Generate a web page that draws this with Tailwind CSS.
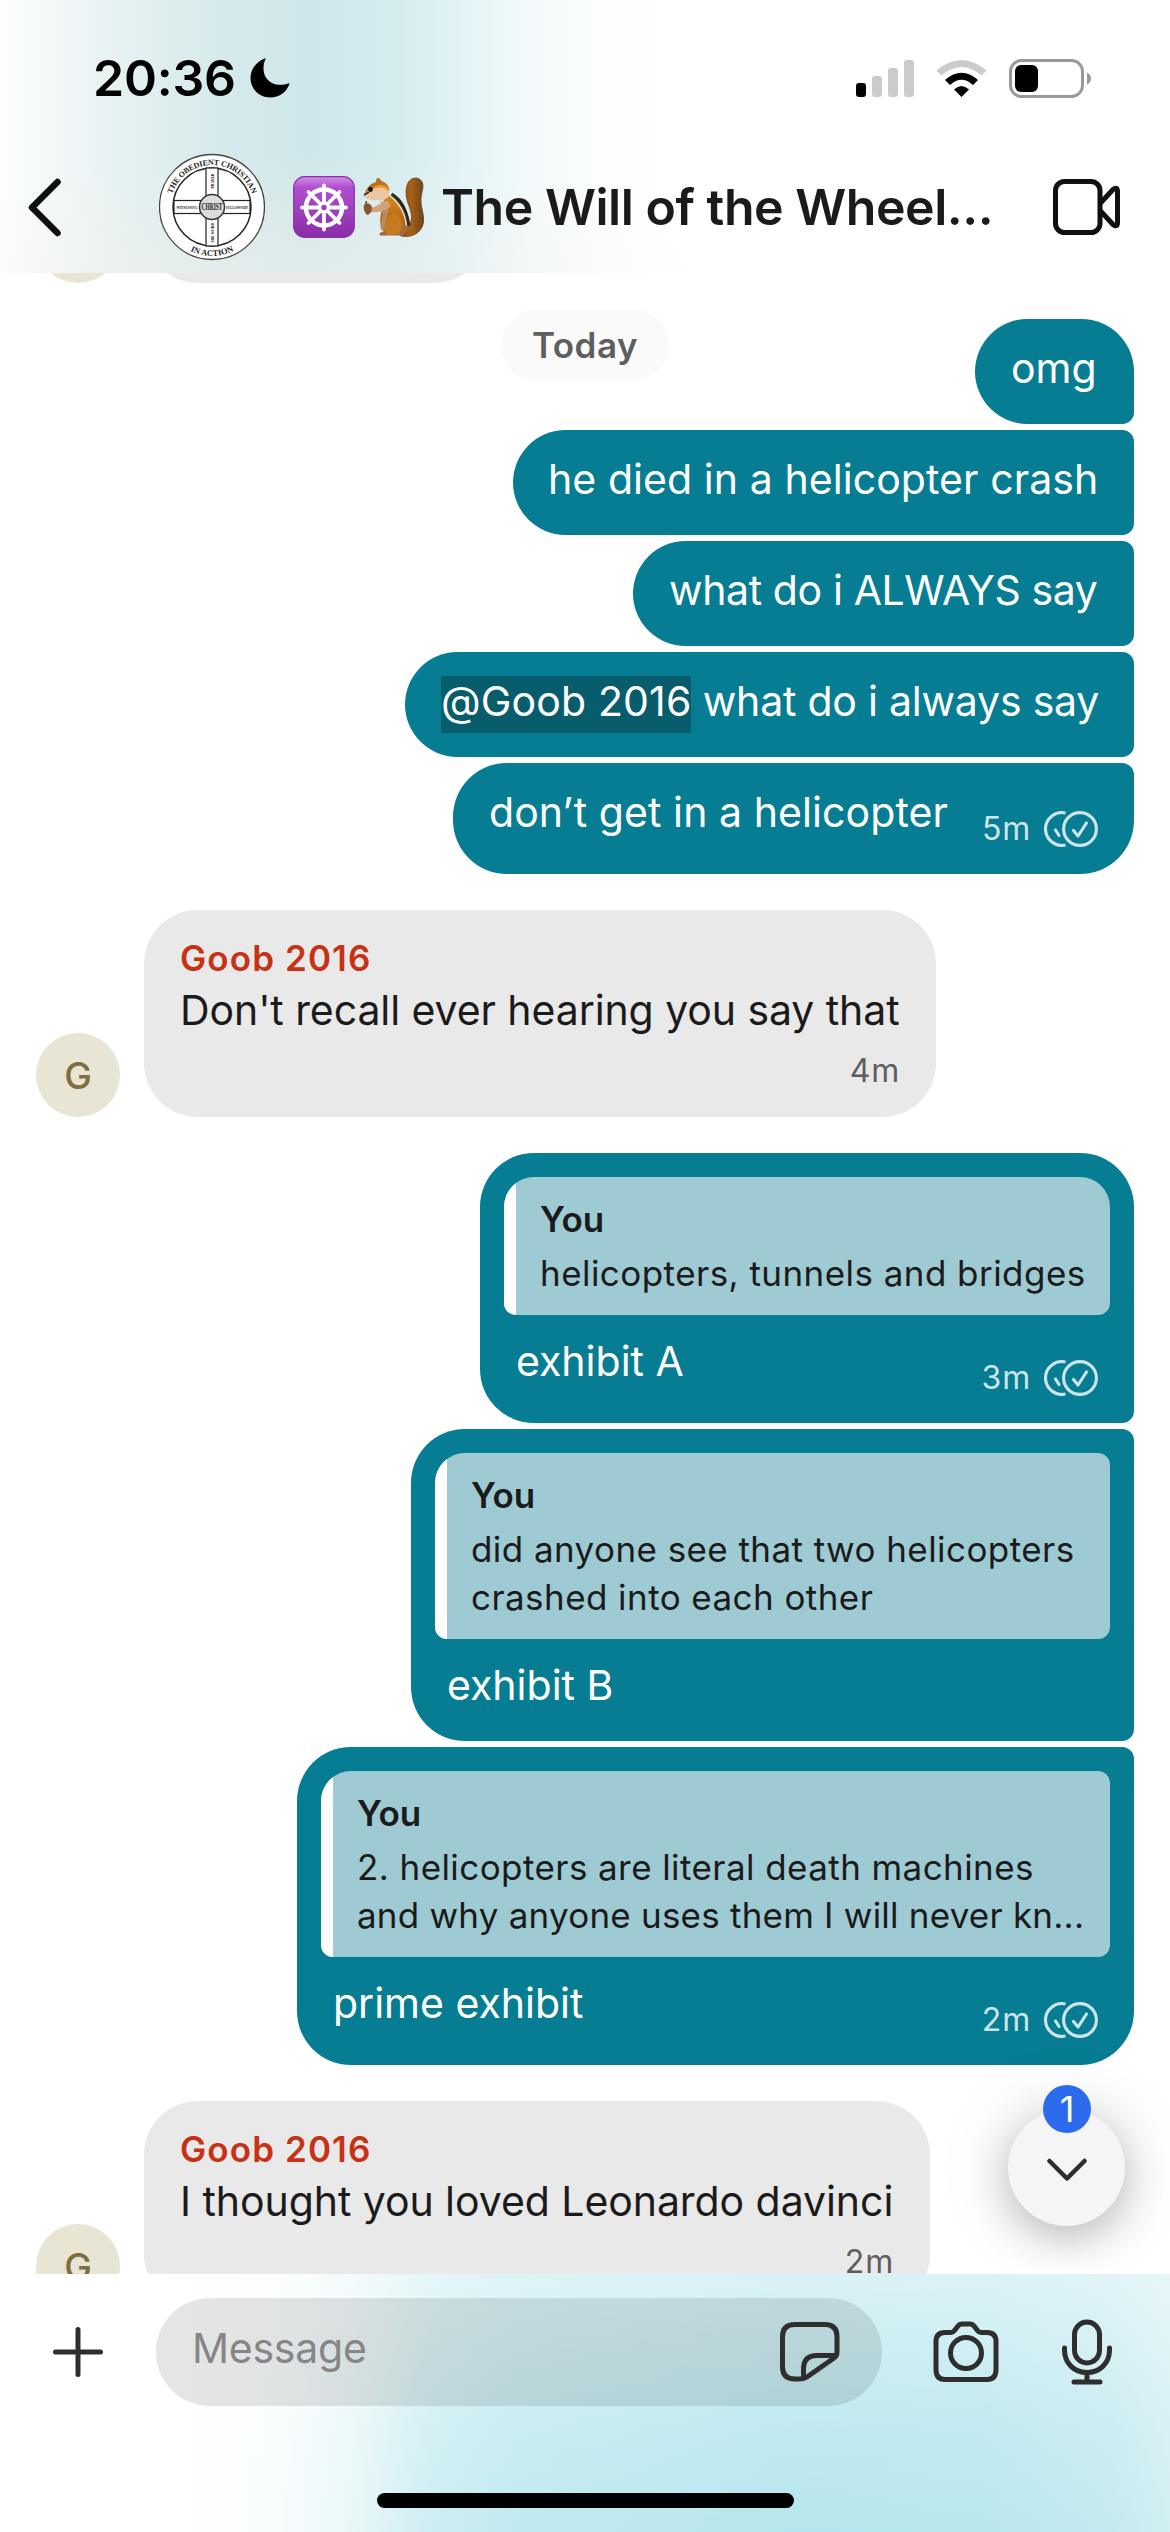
<!DOCTYPE html>
<html lang="en">
<head>
<meta charset="utf-8">
<title>Group chat</title>
<script src="https://cdn.jsdelivr.net/npm/@tailwindcss/browser@4"></script>
</head>
<body class="bg-white">
<svg class="hidden">
  <symbol id="read" viewBox="0 0 54 36" fill="none" stroke="currentColor" stroke-width="3.1" stroke-linecap="round" stroke-linejoin="round">
    <circle cx="36" cy="18" r="16.4"/>
    <path d="M21.5 2A16.4 16.4 0 1 0 21.5 34" stroke-linecap="butt"/>
    <path d="M29.5 19.5L34 25L42.5 12"/>
    <path d="M11.5 19L15 24.5"/>
  </symbol>
</svg>
<div class="relative flex h-[2532px] w-[1170px] flex-col overflow-hidden bg-white font-['Inter',sans-serif] text-[#1b1b1b]">

  <header class="flex h-[273px] shrink-0 flex-col bg-[radial-gradient(420px_150px_at_300px_300px,rgba(247,240,236,0.55),rgba(247,240,236,0)),linear-gradient(to_right,#fcfefe_0px,#f0f6f7_70px,#e4f0f1_130px,#d6eaec_220px,#cfe7ea_310px,#d6edf0_400px,#e2f3f6_460px,#f3fafb_530px,#fbfdfe_600px,#ffffff_680px)]">
    <div class="flex h-[156px] items-center pr-[78px] pl-[93px]">
      <span class="text-[50px] leading-[60px] font-semibold tracking-[-0.2px] text-black">20:36</span>
      <svg class="ml-[14px] h-10 w-10" viewBox="0 0 40 40"><path d="M15.5 1C16 .3 15.6 0 14.7.4C6 4 .5 11 .5 20C.5 31 9 39.5 20.5 39.5C29 39.5 36 34.500 39.300 26.500C39.700 25.500 39.300 25 38.300 25.400C35.500 26.500 32.500 27 29.500 26.800C20 26.500 13.500 20 13.500 10.500C13.500 7 14.200 3.800 15.500 1Z"/></svg>
      <svg class="ml-auto h-[37px] w-[58px]" viewBox="0 0 58 37"><rect y="23" width="10" height="14" rx="3"/><g fill="#cbcbcb"><rect x="16" y="16" width="10" height="21" rx="3"/><rect x="32" y="8" width="10" height="29" rx="3"/><rect x="48" width="10" height="37" rx="3"/></g></svg>
      <svg class="ml-[22px] h-[37px] w-[51px]" viewBox="0 0 51 37"><path d="M0.500 10.500Q25.500 -10.500 50.500 10.500L45.500 15.500Q25.500 -1.500 5.500 15.500Z" fill="#cbcbcb"/><path d="M9 20Q25.500 5.500 42 20L37 25Q25.500 14.500 14 25Z"/><path d="M18 29.500Q25.500 22.500 33 29.500L25.500 37Z"/></svg>
      <svg class="ml-[22px] h-[39px] w-[83px]" viewBox="0 0 83 39"><rect x="1.500" y="1.500" width="72" height="36" rx="11" fill="none" stroke="#999" stroke-width="3"/><rect x="6" y="6" width="23" height="27" rx="6"/><path d="M78 13.500Q82 15.500 82 19.500T78 25.500Z" fill="#999"/></svg>
    </div>
    <div class="flex h-[102px] items-center pr-[49px] pl-[28px]">
      <svg class="h-[66px] w-[34px]" viewBox="0 0 34 66" fill="none" stroke="#101010" stroke-width="6.500" stroke-linecap="round" stroke-linejoin="round"><path d="M29.500 8L4 33.500L29.500 59"/></svg>
      <svg class="ml-[97px] h-[108px] w-[106px]" viewBox="-53 -54 106 108" font-family="Liberation Serif" font-weight="bold" fill="#222">
        <circle r="52.500" fill="#fff" stroke="#444" stroke-width="1.300"/>
        <circle r="39" fill="#fff" stroke="#222" stroke-width="1.500"/>
        <rect x="-38" y="-6.500" width="76" height="13" fill="#fff" stroke="#222" stroke-width="1.200"/>
        <rect x="-6" y="-39" width="12" height="78" fill="#fff" stroke="#222" stroke-width="1.200"/>
        <path d="M-5.300 0H5.300M0 -5.800V5.800" stroke="#fff" stroke-width="11"/>
        <circle r="12.500" fill="#dcdcdc" stroke="#333" stroke-width="1.500"/>
        <text y="3.200" font-size="9.500" text-anchor="middle" textLength="21" lengthAdjust="spacingAndGlyphs">CHRIST</text>
        <g font-size="4.200" text-anchor="middle"><text x="-25" y="1.500" textLength="21" lengthAdjust="spacingAndGlyphs">WITNESSING</text><text x="25" y="1.500" textLength="22" lengthAdjust="spacingAndGlyphs">FELLOWSHIP</text><text transform="translate(1.500 -26) rotate(-90)" textLength="15" lengthAdjust="spacingAndGlyphs">PRAYER</text><text transform="translate(1.500 26) rotate(-90)" textLength="20" lengthAdjust="spacingAndGlyphs">THE WORD</text></g>
        <path id="arcTop" d="M-42 0A42 42 0 0 1 42 0" fill="none"/>
        <path id="arcBottom" d="M-49 0A49 49 0 0 0 49 0" fill="none"/>
        <text font-size="8" letter-spacing="-0.15" text-anchor="middle"><textPath href="#arcTop" startOffset="50%">THE OBEDIENT CHRISTIAN</textPath></text>
        <text font-size="8.500" text-anchor="middle"><textPath href="#arcBottom" startOffset="50%">IN ACTION</textPath></text>
      </svg>
      <svg class="ml-[28px] h-[62px] w-[62px]" viewBox="0 0 62 62">
        <defs><linearGradient id="violet" x2="0" y2="1"><stop stop-color="#cf8be6"/><stop offset=".18" stop-color="#b04fd0"/><stop offset="1" stop-color="#8a2da8"/></linearGradient></defs>
        <rect x=".7" y=".7" width="60.600" height="60.600" rx="11" fill="url(#violet)" stroke="#8931a5" stroke-width="1.200"/>
        <g transform="translate(31 31.500)" stroke="#fff" fill="none" stroke-linecap="round"><circle r="18" stroke-width="4.500"/><circle r="4.500" stroke-width="3.500"/><path stroke-width="3.800" d="M0 -6V-22M0 6V22M-6 0H-22M6 0H22M4.500 4.500L15.500 15.500M-4.500 4.500L-15.500 15.500M4.500 -4.500L15.500 -15.500M-4.500 -4.500L-15.500 -15.500"/></g>
      </svg>
      <svg class="ml-[7px] h-[62px] w-[64px]" viewBox="0 0 64 62">
        <defs><linearGradient id="fur" x2="0" y2="1"><stop stop-color="#d9881c"/><stop offset=".55" stop-color="#bd6b10"/><stop offset="1" stop-color="#9b6a42"/></linearGradient><linearGradient id="tail" x2="1"><stop stop-color="#8a4a10"/><stop offset=".5" stop-color="#a86117"/><stop offset="1" stop-color="#6b4420"/></linearGradient></defs>
        <path d="M39 60C48 62 60 58 61.500 46C62.500 38 58 30 59 22C60 14 62.500 10 59.500 5C56 0 48 1.500 45.500 8C43 15 44 22 47 30C50 38 51 46 46 50C43 53 39 53 36 55Z" fill="url(#tail)" stroke="#70400f" stroke-width=".8"/>
        <path d="M22 22C30 16 40 24 44 34C49 46 47 55 41 59.500H18C16.500 57.500 18.500 56 22 56C17 50 17.500 40 20 34Z" fill="url(#fur)"/>
        <path d="M25 59C21 52 23 41 31 37C39 38 42 50 37 58Z" fill="#c77b20"/>
        <path d="M29 19C38 24 44 36 46 50" fill="none" stroke="#33281e" stroke-width="5"/>
        <path d="M28 20C38 27 43 38 44.500 50" fill="none" stroke="#efe0c8" stroke-width="1.600"/>
        <path d="M18.500 24C20 33 22 37 20 44C17.500 51 18 53 22 56C24 48 24 40 27 35Z" fill="#b98a62"/>
        <path d="M14 5C14 1 17 .5 19.500 5C25 7 28 12 27.500 18C27 22 23 24 18 24C10 25 4 23 2 20C3 13 7 8 14 6Z" fill="#e9c7a0"/>
        <path d="M14 6C14 1 17 .5 19.500 5C24 6.500 27 10 27.500 14C22 9 11 10 3 17C5 11 9 7.500 14 6Z" fill="#b3702c"/>
        <path d="M12 12C17 9 22 9 27 14" fill="none" stroke="#ef941d" stroke-width="2.500"/>
        <circle cx="8.500" cy="13.500" r="2.400" fill="#17110c"/><path d="M2 19L7 16" stroke="#3b291b" stroke-width="1.500"/>
        <path d="M26 25C22 24 17 30 8 32C6 34 8 37 12 36C19 36 26 34 29 30Z" fill="#d3a27a"/>
        <path d="M2 29C5 26 10 28 10 32C10 36 7 39 5 39C3 37 1 33 2 29Z" fill="#88552d"/><path d="M4 28L4.500 25" stroke="#674018" stroke-width="1.500"/>
      </svg>
      <h1 class="ml-[15px] w-[560px] text-[50px] leading-[60px] font-[560] tracking-[-0.46px] whitespace-nowrap">The Will of the Wheel...</h1>
      <svg class="ml-auto h-[58px] w-[68px]" viewBox="0 0 68 58" fill="none" stroke="#101010" stroke-width="5" stroke-linejoin="round"><rect x="2.500" y="3.500" width="44.500" height="51" rx="9"/><path d="M47.500 25L60 11.500Q64.500 8 64.500 13.500V44.500Q64.500 50 60 46.500L47.500 33"/></svg>
    </div>
  </header>

  <main class="relative min-h-0 flex-1 overflow-hidden px-[36px] text-[41px] leading-[57px]">
    <div class="absolute top-[36px] left-[501px] flex h-[72px] w-[168px] items-center justify-center rounded-full bg-[#fafafa] text-[35px] font-[560] tracking-[0.5px] text-[#5e5e5e]">Today</div>

    <div class="-mt-[98px] flex h-[108px] gap-6"><div class="mt-auto h-[84px] w-[84px] rounded-full bg-[#e9e5d4]"></div><div class="w-[344px] rounded-[54px] bg-[#e9e9e9]"></div></div>

    <section class="mt-[36px] flex flex-col items-end gap-[6px] text-white">
      <p class="h-[105px] w-[159px] rounded-[54px] rounded-br-[12px] bg-[#067d92] px-[36px] pt-[21px]">omg</p>
      <p class="h-[105px] w-[621px] rounded-l-[54px] rounded-r-[12px] bg-[#067d92] pt-[21px] pl-[35px] tracking-[0.07px] whitespace-nowrap">he died in a helicopter crash</p>
      <p class="h-[105px] w-[501px] rounded-l-[54px] rounded-r-[12px] bg-[#067d92] px-[36px] pt-[21px] tracking-[-0.38px] whitespace-nowrap">what do i ALWAYS say</p>
      <p class="h-[105px] w-[729px] rounded-l-[54px] rounded-r-[12px] bg-[#067d92] pt-[21px] pl-[36px] tracking-[-0.22px] whitespace-nowrap"><span class="bg-[#085d6d] pb-[7px] tracking-[0.15px]">@Goob 2016</span> what do i always say</p>
      <div class="flex h-[111px] w-[681px] justify-between rounded-l-[54px] rounded-tr-[12px] rounded-br-[54px] bg-[#067d92] pt-[21px] pr-[36px] pb-[27px] pl-[36px]">
        <p class="tracking-[0.08px] whitespace-nowrap">don’t get in a helicopter</p>
        <div class="flex gap-[13px] self-end text-[32px] leading-[36px] tracking-[0.8px] text-[#cde5e9]"><span>5m</span><svg class="h-[36px] w-[54px]"><use href="#read"/></svg></div>
      </div>
    </section>

    <section class="mt-[36px] flex items-end gap-6">
      <div class="flex h-[84px] w-[84px] items-center justify-center rounded-full bg-[#e9e5d4] text-[37px] font-medium text-[#7d6f40]">G</div>
      <div class="flex h-[207px] w-[792px] flex-col rounded-[54px] bg-[#e9e9e9] px-[36px] pt-[24px]">
        <span class="text-[35px] leading-[48px] font-[560] tracking-[1.1px] text-[#c73214]">Goob 2016</span>
        <p class="tracking-[-0.08px] whitespace-nowrap">Don't recall ever hearing you say that</p>
        <span class="mt-[14px] self-end text-[32px] leading-[36px] tracking-[0.8px] text-[#5e5e5e]">4m</span>
      </div>
    </section>

    <section class="mt-[36px] flex flex-col items-end gap-[6px]">
      <div class="h-[270px] w-[654px] rounded-[54px] rounded-br-[12px] bg-[#067d92] px-[24px] pt-[24px]">
        <div class="flex h-[138px] overflow-hidden rounded-t-[30px] rounded-b-[12px] bg-[#9dcad3]">
          <div class="w-[12px] shrink-0 bg-white"></div>
          <div class="pt-[18px] pl-[24px] text-[35px] leading-[48px] whitespace-nowrap"><p class="font-semibold">You</p><p class="mt-[6px] tracking-[0.45px]">helicopters, tunnels and bridges</p></div>
        </div>
        <div class="mt-[18px] flex h-[63px] justify-between px-[12px] text-white"><p>exhibit A</p><div class="flex gap-[13px] self-end text-[32px] leading-[36px] tracking-[0.8px] text-[#cde5e9]"><span>3m</span><svg class="h-[36px] w-[54px]"><use href="#read"/></svg></div></div>
      </div>
      <div class="h-[312px] w-[723px] rounded-l-[54px] rounded-r-[12px] bg-[#067d92] px-[24px] pt-[24px]">
        <div class="flex h-[186px] overflow-hidden rounded-[12px] rounded-tl-[30px] bg-[#9dcad3]">
          <div class="w-[12px] shrink-0 bg-white"></div>
          <div class="pt-[18px] pl-[24px] text-[35px] leading-[48px] whitespace-nowrap"><p class="font-semibold">You</p><p class="mt-[6px] tracking-[0.43px]">did anyone see that two helicopters<br>crashed into each other</p></div>
        </div>
        <p class="mt-[18px] px-[12px] text-white">exhibit B</p>
      </div>
      <div class="h-[318px] w-[837px] rounded-l-[54px] rounded-tr-[12px] rounded-br-[54px] bg-[#067d92] px-[24px] pt-[24px]">
        <div class="flex h-[186px] overflow-hidden rounded-[12px] rounded-tl-[30px] bg-[#9dcad3]">
          <div class="w-[12px] shrink-0 bg-white"></div>
          <div class="pt-[18px] pl-[24px] text-[35px] leading-[48px] whitespace-nowrap"><p class="font-semibold">You</p><p class="mt-[6px] tracking-[0.42px]">2. helicopters are literal death machines</p><p class="tracking-[0.22px]">and why anyone uses them I will never kn...</p></div>
        </div>
        <div class="mt-[18px] flex h-[63px] justify-between px-[12px] text-white"><p>prime exhibit</p><div class="flex gap-[13px] self-end text-[32px] leading-[36px] tracking-[0.8px] text-[#cde5e9]"><span>2m</span><svg class="h-[36px] w-[54px]"><use href="#read"/></svg></div></div>
      </div>
    </section>

    <section class="mt-[36px] flex items-end gap-6">
      <div class="flex h-[84px] w-[84px] items-center justify-center rounded-full bg-[#e9e5d4] text-[37px] font-medium text-[#7d6f40]">G</div>
      <div class="flex h-[207px] w-[786px] flex-col rounded-[54px] bg-[#e9e9e9] px-[36px] pt-[24px]">
        <span class="text-[35px] leading-[48px] font-[560] tracking-[1.1px] text-[#c73214]">Goob 2016</span>
        <p class="tracking-[-0.06px] whitespace-nowrap">I thought you loved Leonardo davinci</p>
        <span class="mt-[14px] self-end text-[32px] leading-[36px] tracking-[0.8px] text-[#5e5e5e]">2m</span>
      </div>
    </section>

    <button class="absolute top-[1836px] left-[1008px] flex h-[117px] w-[117px] items-center justify-center rounded-full bg-[#f5f5f5] shadow-[0_12px_40px_rgba(0,0,0,0.22),0_0_80px_rgba(0,0,0,0.12)]">
      <svg class="mt-[5px] h-[24px] w-[42px]" viewBox="0 0 42 24" fill="none" stroke="#2e2e2e" stroke-width="4.500" stroke-linecap="round" stroke-linejoin="round"><path d="M3.500 3L21 20.500L38.500 3"/></svg>
      <span class="absolute -top-[24px] left-[35px] flex h-[48px] w-[48px] items-center justify-center rounded-full bg-[#2c6bed] text-[36px] leading-[48px] text-white">1</span>
    </button>
  </main>

  <footer class="flex h-[258px] shrink-0 flex-col bg-[linear-gradient(to_bottom,rgba(255,255,255,0.48),rgba(255,255,255,0.14)_60%,transparent),linear-gradient(to_right,#ffffff_170px,#f9fdfe_270px,#eaf7f9_350px,#cdeef3_430px,#c0eaf0_520px,#b6e6ed_800px,#b8e7ee_980px,#c4eaf0_1110px,#d2eff3_1170px)]">
    <div class="mt-[24px] flex h-[108px] items-center pr-[57px] pl-[52px]">
      <svg class="h-[52px] w-[52px]" viewBox="0 0 52 52" stroke="#2e2e2e" stroke-width="5" stroke-linecap="round"><path d="M26 3.500V48.500M3.500 26H48.500"/></svg>
      <div class="ml-[52px] flex h-[108px] w-[726px] items-center justify-between rounded-full bg-black/10 pr-[41px] pl-[36px]">
        <span class="-mt-[8px] text-[41px] leading-[57px] tracking-[-0.25px] text-[#868686]">Message</span>
        <svg class="h-[62px] w-[62px]" viewBox="0 0 62 62" fill="none" stroke="#2e2e2e" stroke-width="5" stroke-linejoin="round"><path d="M16 3.500H46Q58 3.500 58 15.500V31Q58 35 55 37L28 56Q25 58 21 58H16Q3.500 58 3.500 46V15.500Q3.500 3.500 16 3.500Z"/><path d="M24.500 57V48Q24.500 34.500 38 34.500H57"/></svg>
      </div>
      <svg class="ml-[51px] h-[62px] w-[66px]" viewBox="0 0 66 62" fill="none" stroke="#2e2e2e" stroke-width="5" stroke-linejoin="round"><path d="M12 11.500H18Q20 11.500 21.300 9.800L25 5Q26.500 3 29 3H37Q39.500 3 41 5L44.700 9.800Q46 11.500 48 11.500H54Q63 11.500 63 20.500V48.500Q63 58.500 54 58.500H12Q3 58.500 3 48.500V20.500Q3 11.500 12 11.500Z"/><circle cx="33" cy="32" r="15.500"/></svg>
      <svg class="ml-auto h-[66px] w-[52px]" viewBox="0 0 52 66" fill="none" stroke="#2e2e2e" stroke-width="5" stroke-linecap="round"><rect x="13.500" y="3" width="25" height="41" rx="12.500"/><path d="M3.500 29V31C3.500 44 13 53.500 26 53.500S48.500 44 48.500 31V29M26 54V62M13 63H39"/></svg>
    </div>
    <div class="mx-auto mt-[87px] h-[15px] w-[417px] rounded-full bg-black"></div>
  </footer>
</div>
</body>
</html>
